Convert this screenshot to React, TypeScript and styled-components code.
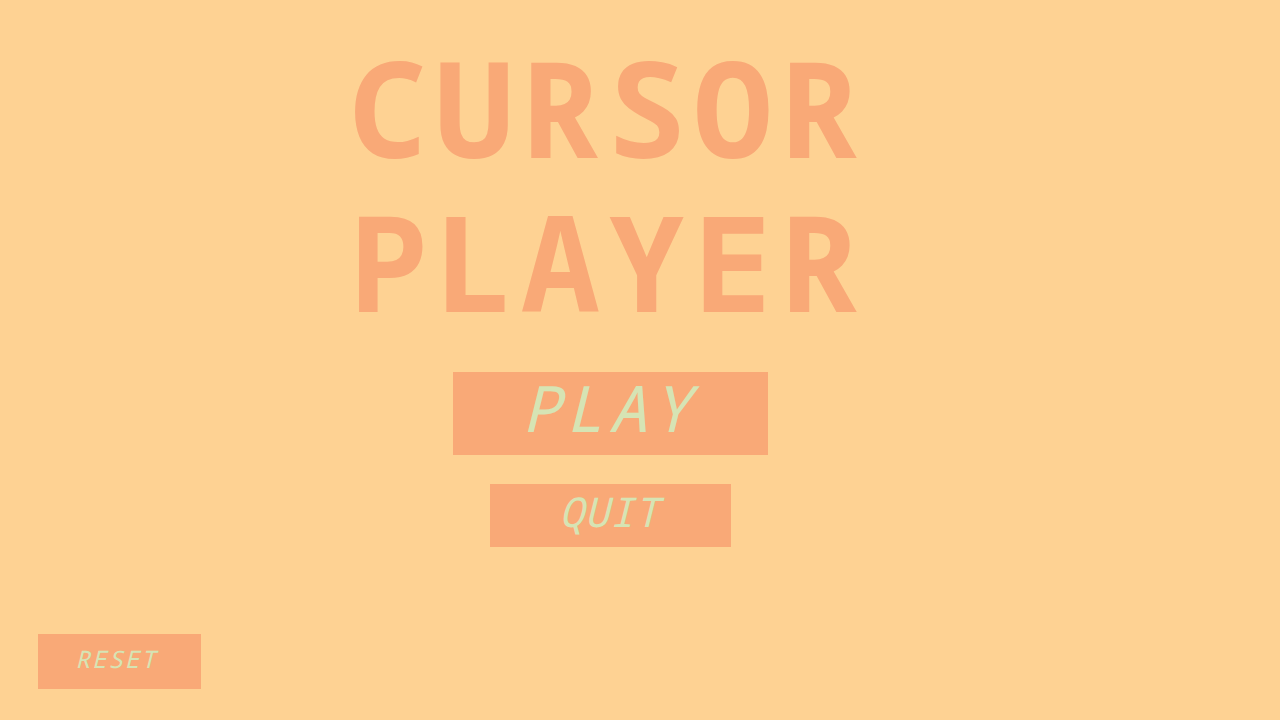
import React from "react";
import styled, { createGlobalStyle, css } from "styled-components";

const Global = createGlobalStyle`
  html, body { margin: 0; padding: 0; background: #FED293; }
  #root { min-height: 100vh; }
`;

const Page = styled.div`
  width: 1280px;
  height: 720px;
  background: #FED293;
  display: flex;
  flex-direction: column;
  box-sizing: border-box;
  overflow: hidden;
`;

const Menu = styled.main`
  width: 1221px;
  display: flex;
  flex-direction: column;
  align-items: center;
  gap: 34px;
  padding-top: 30px;
`;

const Title = styled.h1`
  margin: 0 7px 0 0;
  font-family: "Noto Sans Mono", "DejaVu Sans Mono", monospace;
  font-weight: 700;
  font-size: 132px;
  line-height: 154px;
  letter-spacing: 7px;
  color: #F9A977;
  text-align: center;
`;

const ButtonStack = styled.div`
  display: flex;
  flex-direction: column;
  align-items: center;
  gap: 29px;
`;

type Variant = "large" | "medium" | "small";

const variants = {
  large: css`
    width: 315px;
    height: 83px;
    font-size: 64px;
    letter-spacing: 5px;
    padding: 0 4px 13px 0;
  `,
  medium: css`
    width: 241px;
    height: 63px;
    font-size: 41px;
    letter-spacing: 0.5px;
    padding: 0 2px 9px 0;
  `,
  small: css`
    width: 163px;
    height: 55px;
    font-size: 24px;
    letter-spacing: 2px;
    padding: 0 6px 7px 0;
  `,
};

const MenuButton = styled.button<{ $variant: Variant }>`
  box-sizing: border-box;
  border: none;
  background: #F9A977;
  color: #D6E4B4;
  font-family: "Noto Sans Mono", "DejaVu Sans Mono", monospace;
  font-style: italic;
  font-weight: 400;
  display: flex;
  align-items: center;
  justify-content: center;
  cursor: pointer;
  ${(p) => variants[p.$variant]}
`;

const Footer = styled.footer`
  margin-top: auto;
  padding: 0 0 31px 38px;
  display: flex;
`;

export default function App() {
  return (
    <>
      <Global />
      <Page>
        <Menu>
          <Title>
            CURSOR
            <br />
            PLAYER
          </Title>
          <ButtonStack>
            <MenuButton $variant="large">PLAY</MenuButton>
            <MenuButton $variant="medium">QUIT</MenuButton>
          </ButtonStack>
        </Menu>
        <Footer>
          <MenuButton $variant="small">RESET</MenuButton>
        </Footer>
      </Page>
    </>
  );
}
